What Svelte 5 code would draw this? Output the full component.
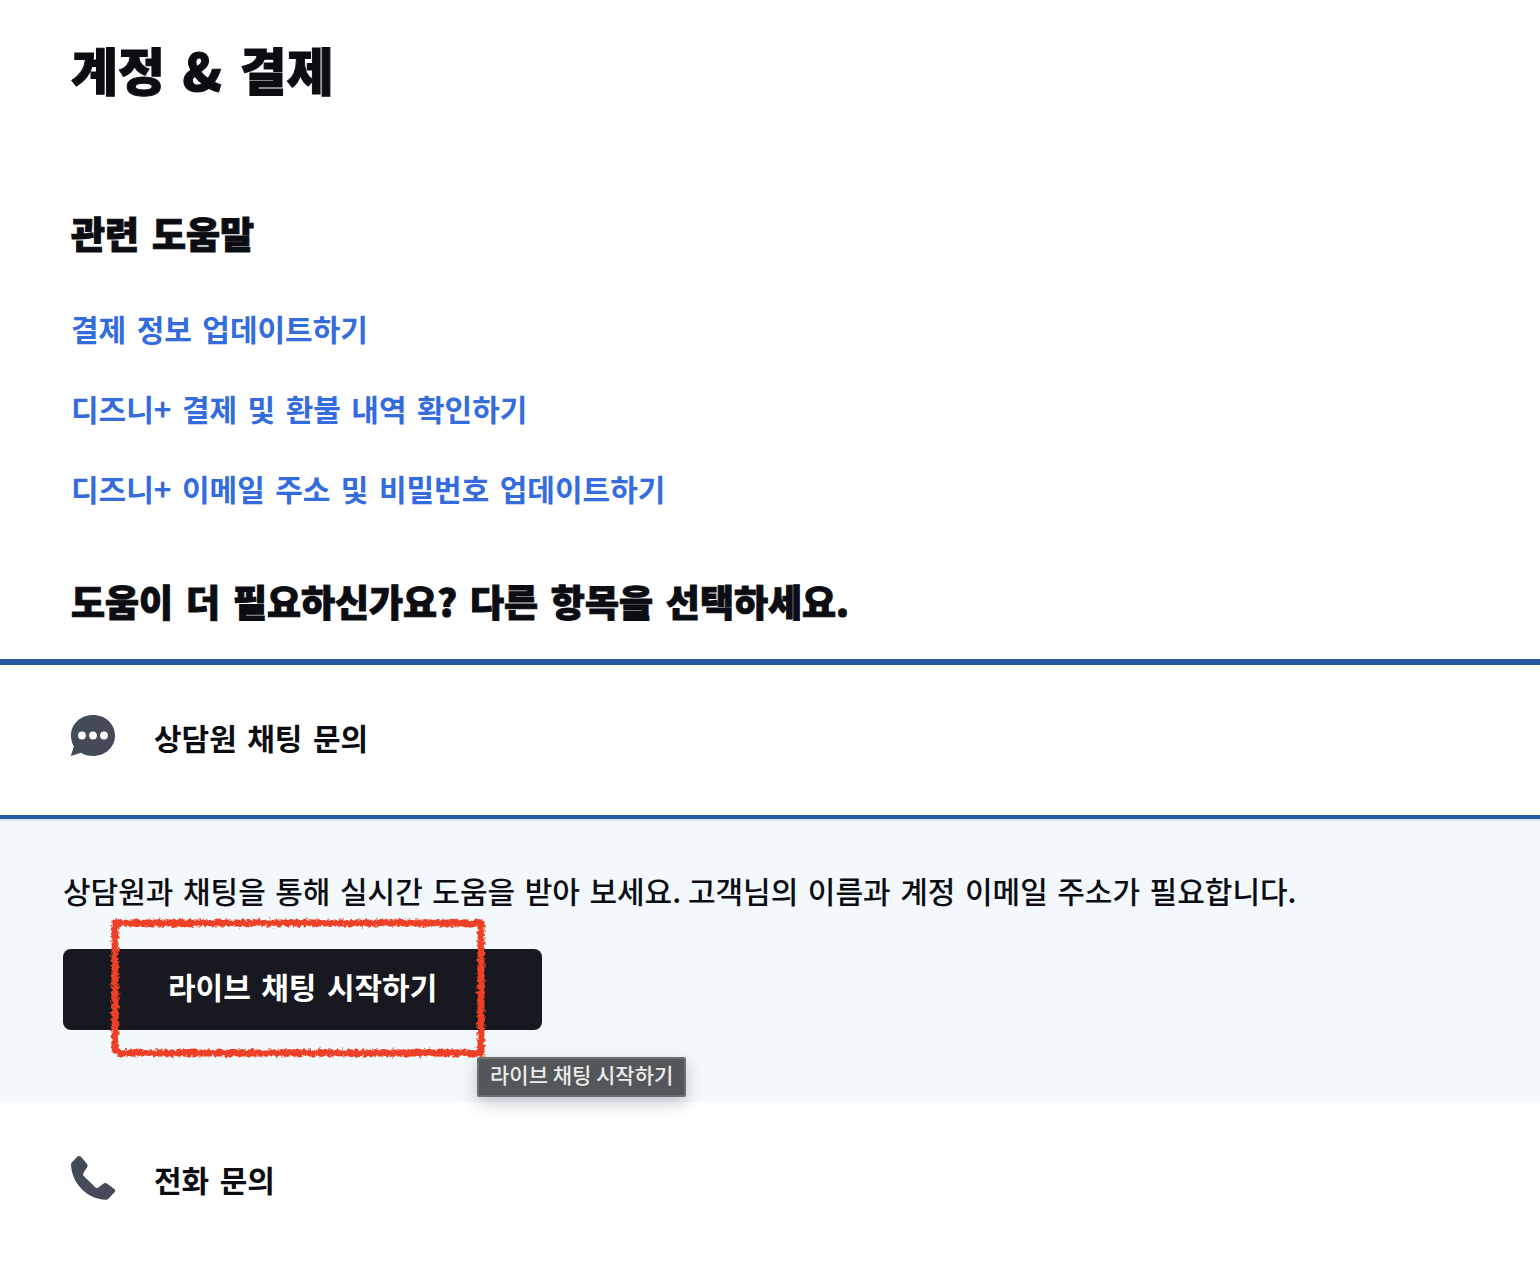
<script>
  const links = [
    { before: '결제 정보 업데이트하기', mark: '', after: '' },
    { before: '디즈니', mark: '+', after: ' 결제 및 환불 내역 확인하기' },
    { before: '디즈니', mark: '+', after: ' 이메일 주소 및 비밀번호 업데이트하기' }
  ];
  let open = $state(true);
</script>

<main>
  <section class="intro">
    <h1>계정 <span class="latin">&amp;</span> 결제</h1>
    <h2>관련 도움말</h2>
    <ul>
      {#each links as link}
        <li><a href="#help">{link.before}<span class="latin">{link.mark}</span>{link.after}</a></li>
      {/each}
    </ul>
    <h2>도움이 더 필요하신가요<span class="latin">?</span> 다른 항목을 선택하세요<span class="latin">.</span></h2>
  </section>

  <section class="options">
    <button class="option chat" aria-expanded={open} onclick={() => (open = !open)}>
      <svg width="46" height="44" viewBox="0 0 46 44" aria-hidden="true">
        <path fill="#454a59" d="M23 1C35.500 1 45 10 45 21.500S35.500 42 23 42c-4.500 0-8.700-1.100-12-3.200L1.600 41.800c-.6.200-.8-.3-.5-.8l2.800-8.500C2 29.300 1 25.500 1 21.500 1 10 10.500 1 23 1Z" />
        <circle cx="12" cy="21.500" r="3.900" fill="#fff" />
        <circle cx="23" cy="21.500" r="3.900" fill="#fff" />
        <circle cx="34" cy="21.500" r="3.900" fill="#fff" />
      </svg>
      <span>상담원 채팅 문의</span>
    </button>

    {#if open}
      <div class="panel">
        <p>상담원과 채팅을 통해 실시간 도움을 받아 보세요<span class="latin">{'. '}</span>고객님의 이름과 계정 이메일 주소가 필요합니다<span class="latin">.</span></p>
        <div class="action">
          <button class="start" aria-describedby="start-tip">라이브 채팅 시작하기</button>
          <svg class="marker" width="386" height="152" viewBox="0 0 386 152" aria-hidden="true">
            <defs>
              <filter id="crayon" x="0" y="0" width="386" height="152" filterUnits="userSpaceOnUse">
                <feTurbulence type="fractalNoise" baseFrequency="0.3" numOctaves="3" seed="7" result="noise" />
                <feDisplacementMap in="SourceGraphic" in2="noise" scale="6" xChannelSelector="R" yChannelSelector="G" />
              </filter>
            </defs>
            <path d="M10 11H376V141H14L10 137Z" fill="none" stroke="#ee4026" stroke-width="7" filter="url(#crayon)" />
          </svg>
          <span class="tip" id="start-tip" role="tooltip">라이브 채팅 시작하기</span>
        </div>
      </div>
    {/if}

    <button class="option phone">
      <svg width="46" height="46" viewBox="0 0 46 46" aria-hidden="true">
        <path fill="#454a59" d="M7.500 1.500C8.700.6 10 .7 11 1.700L17 9c.8 1 .8 2 .1 3.200L13.500 18c-.6 1-.5 2 .2 3L25.500 32.500c.8.700 1.600.8 2.500.2l5-3.800c1.400-1 3-1 4.300-.2l7 5.300c1.200 1 1.200 2.200.3 3.300l-6 6.200c-.8.900-1.700 1.300-2.900 1.200C17.500 44 2.200 29 1 10.200 1 9 1.200 8 2 7.200Z" />
      </svg>
      <span>전화 문의</span>
    </button>
  </section>
</main>

<style>
  :global(body) {
    margin: 0;
    background: #fff;
  }
  main {
    color: #0c0d12;
    font-family: 'DejaVu Sans', 'Noto Sans CJK KR', sans-serif;
    font-size: 30px;
    line-height: 40px;
  }
  .latin {
    font-family: 'Noto Sans CJK KR', sans-serif;
    line-height: 1;
    white-space: pre-wrap;
  }
  .intro {
    padding: 34px 71px 26px;
  }
  h1,
  h2,
  ul,
  p {
    margin: 0;
    padding: 0;
  }
  h1,
  h2 {
    font-weight: 900;
    -webkit-text-stroke: 1px currentColor;
  }
  h1 {
    font-size: 51px;
    line-height: 80px;
  }
  h2 {
    font-size: 37px;
    line-height: 56px;
  }
  h1 + h2 {
    margin-top: 95px;
  }
  ul {
    display: grid;
    gap: 40px;
    margin: 46px 0 66px;
    list-style: none;
  }
  a {
    color: #346cdd;
    font-weight: 700;
    text-decoration: none;
  }
  .options {
    border-top: 6px solid #285ba7;
  }
  .option {
    display: flex;
    align-items: center;
    gap: 38px;
    width: 100%;
    border: 0;
    padding: 52px 70px 48px;
    background: #fff;
    color: inherit;
    font: inherit;
    font-weight: 700;
    text-align: left;
  }
  .chat {
    padding-top: 47px;
    padding-bottom: 55px;
    border-bottom: 4px solid #285ba7;
  }
  .option svg {
    flex: none;
  }
  .option span {
    padding-top: 8px;
  }
  .panel {
    padding: 52px 63px 72px;
    border-top: 2px solid #dbe0ea;
    background: #f3f8fc;
  }
  .panel p {
    font-weight: 500;
  }
  .action {
    position: relative;
    width: fit-content;
    margin-top: 36px;
  }
  .start {
    display: block;
    border: 0;
    border-radius: 8px;
    padding: 20px 105px 21px;
    background: #181920;
    color: #fff;
    font: inherit;
    font-weight: 700;
  }
  .marker {
    position: absolute;
    left: 42px;
    top: -37px;
    pointer-events: none;
  }
  .tip {
    position: absolute;
    left: 414px;
    top: 108px;
    border: 2px solid #6c7072;
    border-radius: 2px;
    padding: 0 11px 6px;
    background: #53575a;
    box-shadow: 0 6px 16px rgb(40 45 70 / 25%);
    color: #ececec;
    font-family: 'Noto Sans CJK KR', sans-serif;
    font-size: 21px;
    font-weight: 500;
    line-height: 30px;
    white-space: nowrap;
  }
</style>
